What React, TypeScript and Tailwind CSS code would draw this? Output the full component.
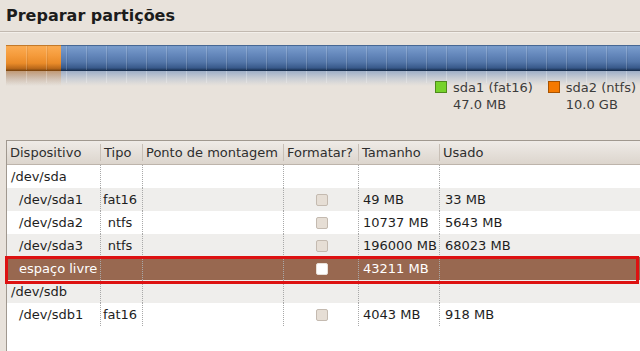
import React from "react";

type Row = {
  dev: string;
  child?: boolean;
  tipo?: string;
  fmt?: boolean;
  tam?: string;
  usado?: string;
  selected?: boolean;
};

const rows: Row[] = [
  { dev: "/dev/sda" },
  { dev: "/dev/sda1", child: true, tipo: "fat16", fmt: true, tam: "49 MB", usado: "33 MB" },
  { dev: "/dev/sda2", child: true, tipo: "ntfs", fmt: true, tam: "10737 MB", usado: "5643 MB" },
  { dev: "/dev/sda3", child: true, tipo: "ntfs", fmt: true, tam: "196000 MB", usado: "68023 MB" },
  { dev: "espaço livre", child: true, fmt: true, tam: "43211 MB", selected: true },
  { dev: "/dev/sdb" },
  { dev: "/dev/sdb1", child: true, tipo: "fat16", fmt: true, tam: "4043 MB", usado: "918 MB" },
];

function PartitionBar() {
  const dividers: number[] = [];
  for (let x = 20; x < 634; x += 20) dividers.push(x);
  return (
    <svg width="634" height="42" viewBox="0 0 634 42" className="absolute left-0 top-0">
      <defs>
        <linearGradient id="blue" x1="0" y1="0" x2="0" y2="1">
          <stop offset="0" stopColor="#2f4f7a" />
          <stop offset="0.06" stopColor="#7a9dcc" />
          <stop offset="0.35" stopColor="#6689bd" />
          <stop offset="0.65" stopColor="#5477aa" />
          <stop offset="0.88" stopColor="#38598a" />
          <stop offset="0.96" stopColor="#1f385c" />
          <stop offset="1" stopColor="#172b48" />
        </linearGradient>
        <linearGradient id="orange" x1="0" y1="0" x2="0" y2="1">
          <stop offset="0" stopColor="#a96216" />
          <stop offset="0.06" stopColor="#fbab52" />
          <stop offset="0.4" stopColor="#f59b3b" />
          <stop offset="0.7" stopColor="#ea8b29" />
          <stop offset="0.9" stopColor="#b9681a" />
          <stop offset="1" stopColor="#73400d" />
        </linearGradient>
        <linearGradient id="blueR" x1="0" y1="0" x2="0" y2="1">
          <stop offset="0" stopColor="#5f82b5" stopOpacity="0.55" />
          <stop offset="1" stopColor="#8aa6cc" stopOpacity="0" />
        </linearGradient>
        <linearGradient id="orangeR" x1="0" y1="0" x2="0" y2="1">
          <stop offset="0" stopColor="#e08a34" stopOpacity="0.55" />
          <stop offset="1" stopColor="#f0b070" stopOpacity="0" />
        </linearGradient>
      </defs>
      <rect x="0" y="0" width="634" height="26" fill="url(#blue)" />
      <rect x="0" y="0" width="55" height="26" fill="url(#orange)" />
      <rect x="0" y="26" width="634" height="15" fill="url(#blueR)" />
      <rect x="0" y="26" width="55" height="15" fill="url(#orangeR)" />
      {dividers.map((x) => (
        <g key={x}>
          <rect x={x} y="1" width="1" height="24" fill="#ffffff" opacity="0.18" />
          <rect x={x + 1} y="1" width="1" height="24" fill="#000000" opacity="0.06" />
          <rect x={x} y="26" width="1" height="12" fill="#ffffff" opacity="0.25" />
        </g>
      ))}
    </svg>
  );
}

function Checkbox({ selected }: { selected?: boolean }) {
  return (
    <div
      className={
        selected
          ? "w-[12px] h-[12px] rounded-[2px] border border-[#e8e0d8] bg-white"
          : "w-[12px] h-[12px] rounded-[2px] border border-[#c4bab0] bg-[#e6ded5]"
      }
    />
  );
}

const grid = "grid grid-cols-[94px_42px_141px_75px_81px_1fr]";
const dot = "border-r border-dotted border-[#a8a8a8]";

export default function App() {
  return (
    <div className="w-[640px] h-[351px] bg-[#e8e2db] overflow-hidden flex flex-col font-['DejaVu_Sans',sans-serif] relative">
      <h1 className="h-[31px] pt-[6px] pl-[6px] text-[16px] leading-[20px] font-bold text-[#1c1c1c]">
        Preparar partições
      </h1>
      <div className="h-px bg-[#c2b9b0]" />
      <div className="h-px bg-[#f3efea]" />
      <div className="mt-[12px] ml-[6px] relative h-[26px]">
        <PartitionBar />
      </div>
      <div className="mt-[8px] flex justify-end gap-[15px] pr-[4px] text-[13px] leading-[17px] text-[#3c3c3c] relative">
        <div className="flex items-start gap-[6px]">
          <div className="mt-[2px] w-[12px] h-[12px] bg-[#76d22a] border border-[#4e8a1c]" />
          <div>
            <div>sda1 (fat16)</div>
            <div>47.0 MB</div>
          </div>
        </div>
        <div className="flex items-start gap-[6px]">
          <div className="mt-[2px] w-[12px] h-[12px] bg-[#f57900] border border-[#a85300]" />
          <div>
            <div>sda2 (ntfs)</div>
            <div>10.0 GB</div>
          </div>
        </div>
      </div>

      <div className="mt-[27px] ml-[6px] flex-1 flex flex-col border-l border-t border-[#a0988f] bg-white text-[13px] text-[#1e1e1e]">
        <div className={`${grid} h-[24px] bg-gradient-to-b from-[#efebe7] to-[#dcd5cd] border-b border-[#bdb4ab] text-[#2e2e2e]`}>
          {["Dispositivo", "Tipo", "Ponto de montagem", "Formatar?", "Tamanho", "Usado"].map((h, i) => (
            <div key={h} className="flex items-center">
              <div
                className={
                  i < 5
                    ? "h-[17px] w-full pl-[3px] leading-[17px] whitespace-nowrap border-r border-[#c8bfb6]"
                    : "h-[17px] w-full pl-[3px] leading-[17px] whitespace-nowrap"
                }
              >
                {h}
              </div>
            </div>
          ))}
        </div>
        {rows.map((r, i) => {
          const bg = r.selected ? "bg-[#986850] text-white" : i % 2 === 1 ? "bg-[#efeeec]" : "bg-white";
          return (
            <div key={r.dev} className={`${grid} h-[23px] leading-[23px] ${bg}`}>
              <div className={`${dot} ${r.child ? "pl-[12px]" : "pl-[4px]"} whitespace-nowrap`}>{r.dev}</div>
              <div className={`${dot} text-center pr-[3px]`}>{r.tipo ?? ""}</div>
              <div className={dot} />
              <div className={`${dot} flex items-center justify-center pl-[1px]`}>
                {r.fmt ? <Checkbox selected={r.selected} /> : null}
              </div>
              <div className={`${dot} pl-[4px] whitespace-nowrap`}>{r.tam ?? ""}</div>
              <div className="pl-[5px] whitespace-nowrap">{r.usado ?? ""}</div>
            </div>
          );
        })}
        <div className="flex-1 bg-white" />
      </div>

      <div className="absolute left-[5px] top-[256px] w-[634px] h-[28px] border-[3px] border-[#dd1111] pointer-events-none" />
    </div>
  );
}
